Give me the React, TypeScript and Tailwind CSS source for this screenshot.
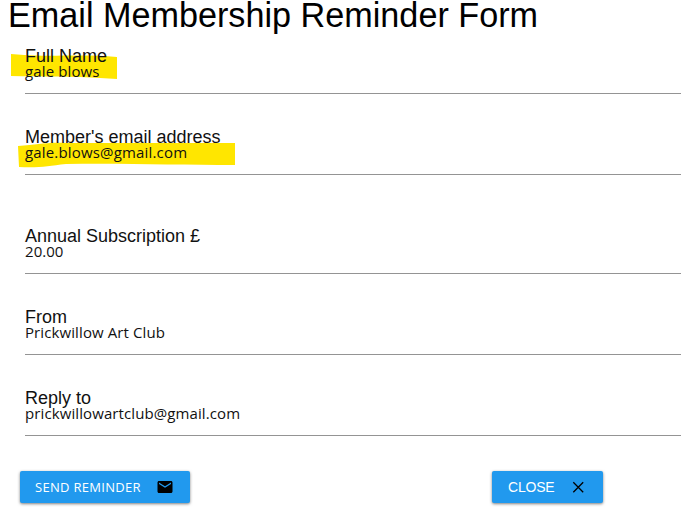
import React from "react";

type FieldProps = {
  label: string;
  value: string;
  valueClass: string;
  className?: string;
  highlight?: React.ReactNode;
};

function Field({ label, value, valueClass, className = "", highlight }: FieldProps) {
  return (
    <div className={`relative ml-[25px] h-[49px] border-b border-[#949494] ${className}`}>
      {highlight}
      <div className="relative h-[18px] pt-px text-[18px] leading-[21px] whitespace-nowrap text-[#111]">{label}</div>
      <div
        className={`relative h-4 font-['Open_Sans','Noto_Sans',sans-serif] text-[15px] leading-4 whitespace-nowrap text-[#111] ${valueClass}`}
      >
        {value}
      </div>
    </div>
  );
}

export default function App() {
  return (
    <div className="h-[522px] w-[681px] overflow-hidden bg-white font-['Liberation_Sans',Arial,sans-serif]">
      <h1 className="h-[45px] pl-2 text-[34.2px] leading-[31px] whitespace-nowrap text-black">
        Email Membership Reminder Form
      </h1>
      <Field
        label="Full Name"
        value="gale blows"
        valueClass="tracking-[0.12px]"
        highlight={
          <svg className="absolute top-0 -left-[25px]" width="130" height="40" viewBox="0 45 130 40">
            <path d="M11 54 L24 55 C50 57 85 54 117 57 L117 79 L100 78 C75 76 42 77 11 76 Z" fill="#ffe600" />
          </svg>
        }
      />
      <Field
        className="mt-8"
        label="Member's email address"
        value="gale.blows@gmail.com"
        valueClass="tracking-[0.17px]"
        highlight={
          <svg className="absolute top-0 -left-[25px]" width="250" height="45" viewBox="0 126 250 45">
            <path d="M18 146 C38 145 45 142 66 143 L235 143 L235 165 C180 165 120 163 66 164 C48 166 40 168 19 167 Z" fill="#ffe600" />
          </svg>
        }
      />
      <Field className="mt-[50px]" label="Annual Subscription £" value="20.00" valueClass="tracking-[0.05px]" />
      <Field className="mt-8" label="From" value="Prickwillow Art Club" valueClass="tracking-[0.1px]" />
      <Field className="mt-8" label="Reply to" value="prickwillowartclub@gmail.com" valueClass="tracking-[0.1px]" />
      <div className="mt-[35px] flex justify-between pr-[78px] pl-5">
        <button className="flex h-8 w-[170px] items-center rounded-[2px] bg-[#2199ee] pl-[15px] text-white shadow-[0_1px_3px_rgba(0,0,0,0.5)]">
          <span className="w-[121px] text-left font-['Open_Sans','Noto_Sans',sans-serif] text-[13px] leading-8 tracking-[0.3px] whitespace-nowrap">
            SEND REMINDER
          </span>
          <svg width="18" height="18" viewBox="0 0 24 24" fill="#000">
            <path d="M20 4H4c-1.1 0-2 .9-2 2v12c0 1.1.9 2 2 2h16c1.1 0 2-.9 2-2V6c0-1.1-.9-2-2-2zm0 4l-8 5-8-5V6l8 5 8-5v2z" />
          </svg>
        </button>
        <button className="flex h-8 w-[111px] items-center rounded-[2px] bg-[#2199ee] pl-4 text-white shadow-[0_1px_3px_rgba(0,0,0,0.5)]">
          <span className="w-[61px] text-left text-[14px] leading-[30px] tracking-[-0.2px] whitespace-nowrap">
            CLOSE
          </span>
          <svg width="18" height="18" viewBox="0 0 18 18" fill="none" stroke="#000" strokeWidth="1.3">
            <path d="M4.3 4.3 L14.2 14.2 M14.2 4.3 L4.3 14.2" />
          </svg>
        </button>
      </div>
    </div>
  );
}
